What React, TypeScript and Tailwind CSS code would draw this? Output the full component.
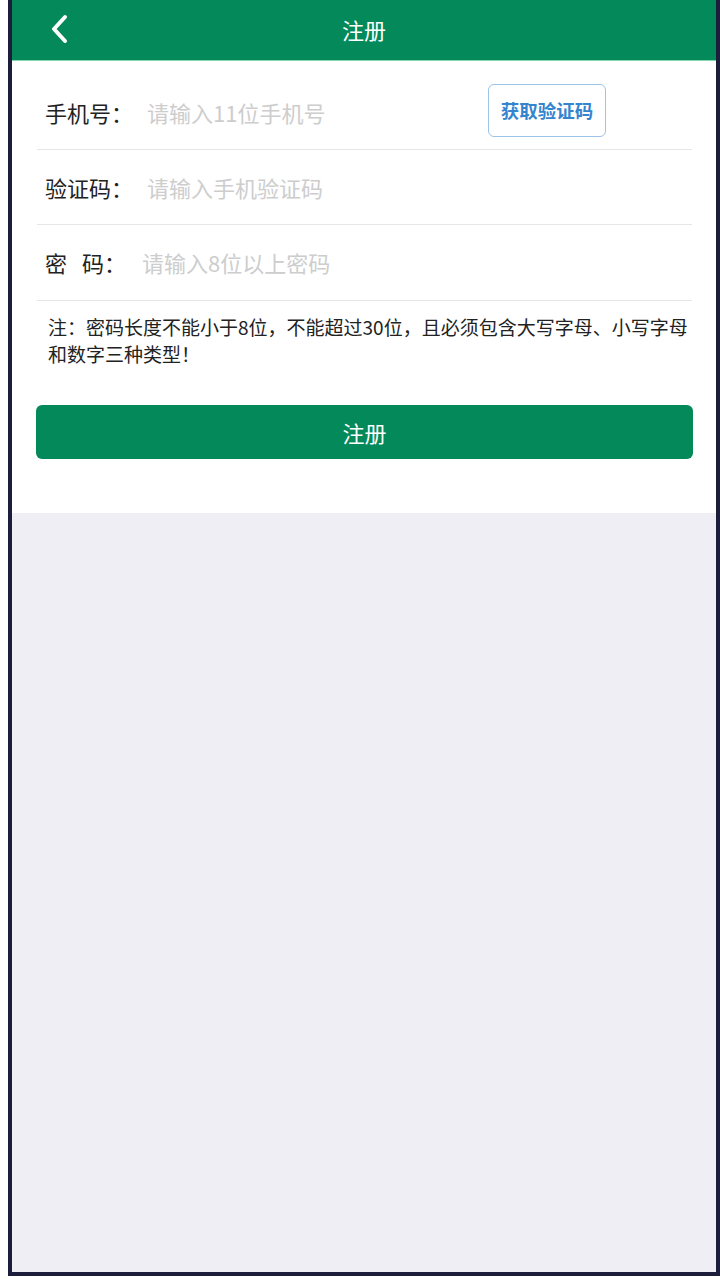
import React from "react";

const font = { fontFamily: '"Noto Sans CJK SC", "Noto Sans", sans-serif' };

const BackIcon = () => (
  <svg width="20" height="30" viewBox="0 0 20 30" fill="none">
    <polyline points="16,3 5,15 16,27" stroke="#ffffff" strokeWidth="4" strokeLinecap="round" strokeLinejoin="round" />
  </svg>
);

const Register = () => {
  return (
    <div className="h-[1280px] w-[720px] bg-white pl-[8px] pb-[4px]" style={font}>
      <div className="flex h-[1276px] flex-col border-x-4 border-b-4 border-[#1c1d3b] bg-[#efeef5]">
        {/* header */}
        <div className="relative flex h-[61px] items-center justify-center border-b border-[#86d6ad] bg-[#03895a]">
          <button className="absolute left-[35px] top-[13px] flex h-[32px] w-[24px] items-center justify-center">
            <BackIcon />
          </button>
          <h1 className="-mt-[2px] text-[22px] text-white">注册</h1>
        </div>

        <div className="bg-white pt-[14px] pb-[54px]">
          <div className="ml-[25px] mr-[24px]">
            {/* phone */}
            <div className="flex h-[75px] items-center border-b border-[#e6e6e6] pl-[8px]">
              <span className="shrink-0 text-[22px] text-[#222]">手机号：</span>
              <input
                className="ml-[14px] w-[300px] bg-transparent text-[22px] text-[#222] outline-none placeholder:text-[#cdcdcd]"
                placeholder="请输入11位手机号"
              />
              <button className="mb-[3px] ml-auto mr-[86px] flex h-[53px] w-[118px] items-center justify-center rounded-[6px] border border-[#9cc3e9] text-[18.5px] font-bold text-[#3584d0]">
                获取验证码
              </button>
            </div>
            {/* code */}
            <div className="flex h-[75px] items-center border-b border-[#e6e6e6] pl-[8px]">
              <span className="shrink-0 text-[22px] text-[#222]">验证码：</span>
              <input
                className="ml-[14px] flex-1 bg-transparent text-[22px] text-[#222] outline-none placeholder:text-[#cdcdcd]"
                placeholder="请输入手机验证码"
              />
            </div>
            {/* password */}
            <div className="flex h-[76px] items-center border-b border-[#e6e6e6] pl-[8px]">
              <span className="shrink-0 text-[22px] text-[#222]">
                密<span className="inline-block w-[15px]" />码：
              </span>
              <input
                type="password"
                className="ml-[16px] flex-1 bg-transparent text-[22px] text-[#222] outline-none placeholder:text-[#cdcdcd]"
                placeholder="请输入8位以上密码"
              />
            </div>
            <p className="pl-[11px] pt-[12px] text-[19px] leading-[27px] text-[#222]">
              注：密码长度不能小于8位，不能超过30位，且必须包含大写字母、小写字母和数字三种类型！
            </p>
          </div>

          <div className="ml-[24px] mr-[23px] mt-[38px]">
            <button className="flex h-[54px] w-full items-center justify-center rounded-[6px] bg-[#03895a] text-[22px] text-white">
              注册
            </button>
          </div>
        </div>

        <div className="flex-1 bg-[#efeef5]" />
      </div>
    </div>
  );
};

export default function App() {
  return <Register />;
}
